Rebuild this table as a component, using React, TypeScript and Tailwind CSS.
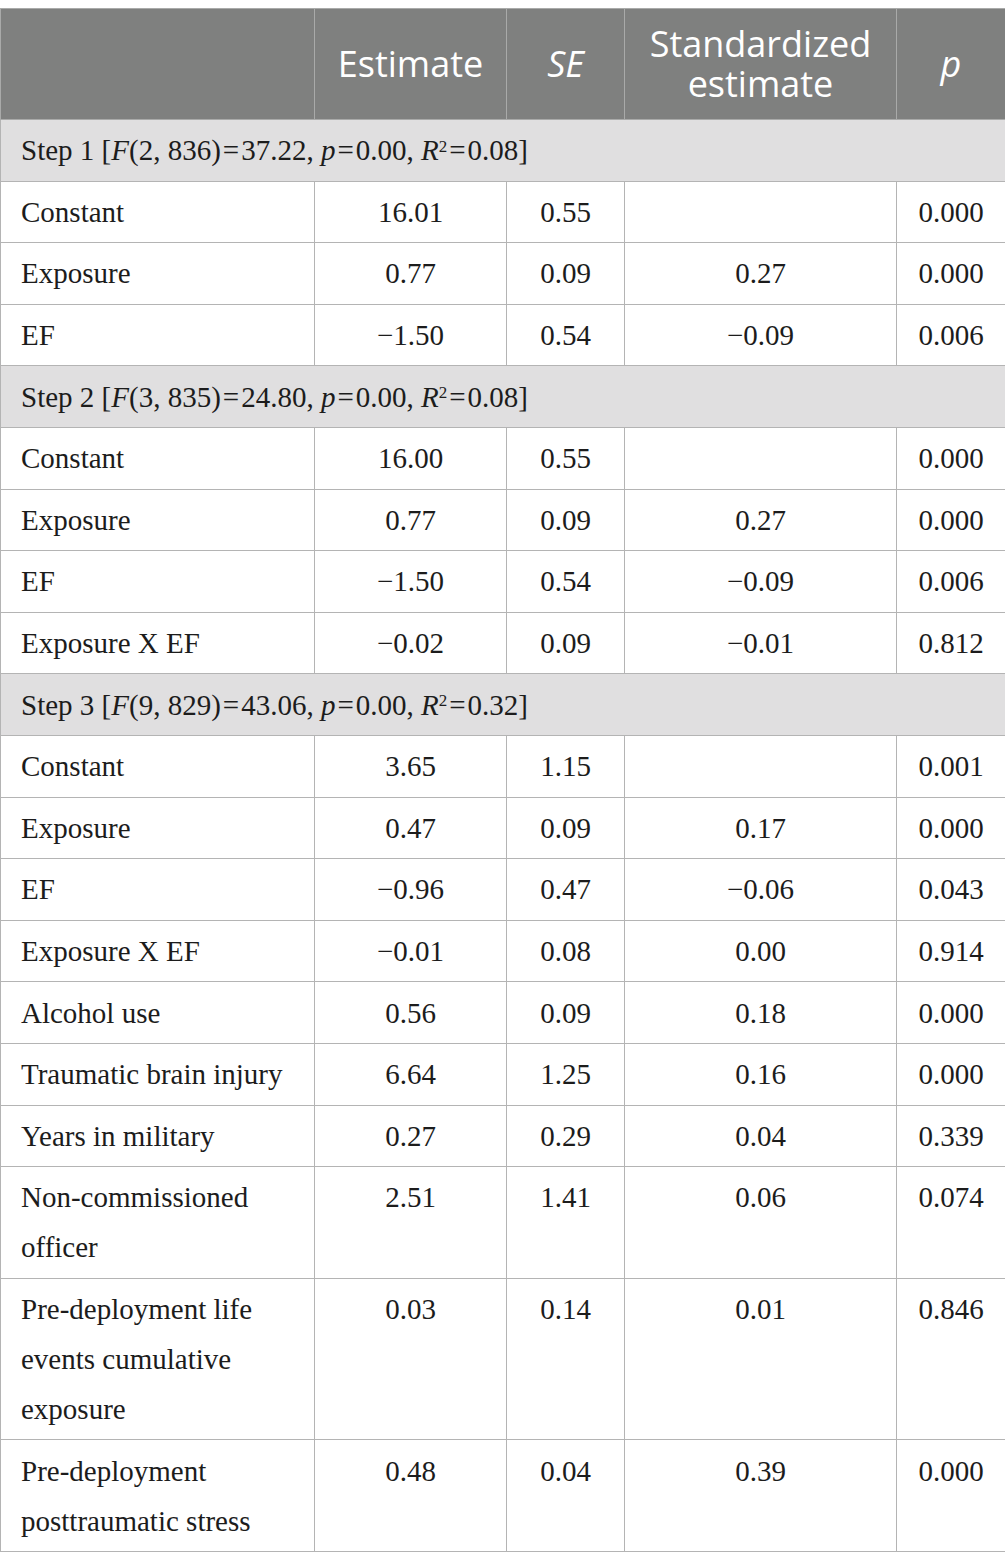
import React from 'react';

type Row =
  | { kind: 'step'; label: React.ReactNode }
  | { kind: 'data'; name: string; est: string; se: string; std: string; p: string };

const eq = <span className="px-[2px]">=</span>;

const step = (n: number, df: string, f: string, r2: string): React.ReactNode => (
  <>
    Step {n} [<i>F</i>({df}){eq}{f}, <i>p</i>{eq}0.00, <i>R</i>
    <sup className="text-[17px]">2</sup>
    {eq}{r2}]
  </>
);

const rows: Row[] = [
  { kind: 'step', label: step(1, '2, 836', '37.22', '0.08') },
  { kind: 'data', name: 'Constant', est: '16.01', se: '0.55', std: '', p: '0.000' },
  { kind: 'data', name: 'Exposure', est: '0.77', se: '0.09', std: '0.27', p: '0.000' },
  { kind: 'data', name: 'EF', est: '−1.50', se: '0.54', std: '−0.09', p: '0.006' },
  { kind: 'step', label: step(2, '3, 835', '24.80', '0.08') },
  { kind: 'data', name: 'Constant', est: '16.00', se: '0.55', std: '', p: '0.000' },
  { kind: 'data', name: 'Exposure', est: '0.77', se: '0.09', std: '0.27', p: '0.000' },
  { kind: 'data', name: 'EF', est: '−1.50', se: '0.54', std: '−0.09', p: '0.006' },
  { kind: 'data', name: 'Exposure X EF', est: '−0.02', se: '0.09', std: '−0.01', p: '0.812' },
  { kind: 'step', label: step(3, '9, 829', '43.06', '0.32') },
  { kind: 'data', name: 'Constant', est: '3.65', se: '1.15', std: '', p: '0.001' },
  { kind: 'data', name: 'Exposure', est: '0.47', se: '0.09', std: '0.17', p: '0.000' },
  { kind: 'data', name: 'EF', est: '−0.96', se: '0.47', std: '−0.06', p: '0.043' },
  { kind: 'data', name: 'Exposure X EF', est: '−0.01', se: '0.08', std: '0.00', p: '0.914' },
  { kind: 'data', name: 'Alcohol use', est: '0.56', se: '0.09', std: '0.18', p: '0.000' },
  { kind: 'data', name: 'Traumatic brain injury', est: '6.64', se: '1.25', std: '0.16', p: '0.000' },
  { kind: 'data', name: 'Years in military', est: '0.27', se: '0.29', std: '0.04', p: '0.339' },
  { kind: 'data', name: 'Non-commissioned officer', est: '2.51', se: '1.41', std: '0.06', p: '0.074' },
  { kind: 'data', name: 'Pre-deployment life events cumulative exposure', est: '0.03', se: '0.14', std: '0.01', p: '0.846' },
  { kind: 'data', name: 'Pre-deployment posttraumatic stress', est: '0.48', se: '0.04', std: '0.39', p: '0.000' },
];

const th = 'border border-[#a9aaa9] px-2 py-[15px] text-center align-middle font-normal';
const td = 'border border-[#b4b4b4] py-[5.3px] leading-[50px] align-top';

export default function App() {
  return (
    <div className="min-h-screen bg-white pt-[8px]">
      <table className="w-[1005px] table-fixed border-collapse border border-[#b4b4b4] text-[29px] text-[#1c1c1c] font-['Liberation_Serif',serif]">
        <colgroup>
          <col className="w-[314px]" />
          <col className="w-[192px]" />
          <col className="w-[118px]" />
          <col className="w-[272px]" />
          <col className="w-[109px]" />
        </colgroup>
        <thead>
          <tr className="bg-[#7f807f] text-white text-[36px] leading-[40px] font-['Open_Sans',sans-serif]">
            <th className={th}></th>
            <th className={th}>Estimate</th>
            <th className={th}><i>SE</i></th>
            <th className={th}>Standardized<br />estimate</th>
            <th className={th}><i>p</i></th>
          </tr>
        </thead>
        <tbody>
          {rows.map((r, i) =>
            r.kind === 'step' ? (
              <tr key={i} className="bg-[#e0dfe0]">
                <td colSpan={5} className={`${td} pl-[20px] whitespace-nowrap`}>{r.label}</td>
              </tr>
            ) : (
              <tr key={i}>
                <td className={`${td} pl-[20px] pr-[12px]`}>{r.name}</td>
                <td className={`${td} text-center`}>{r.est}</td>
                <td className={`${td} text-center`}>{r.se}</td>
                <td className={`${td} text-center`}>{r.std}</td>
                <td className={`${td} text-center`}>{r.p}</td>
              </tr>
            )
          )}
        </tbody>
      </table>
    </div>
  );
}
